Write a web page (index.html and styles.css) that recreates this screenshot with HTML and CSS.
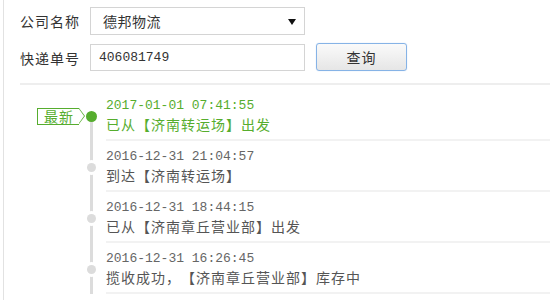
FILE: index.html
```html
<!DOCTYPE html>
<html lang="zh-CN">
<head>
  <meta charset="UTF-8">
  <title>快递查询</title>
  <link rel="stylesheet" href="styles.css">
</head>
<body>
  <div class="page">
    <div class="query">
      <div class="row">
        <label>公司名称</label>
        <div class="select">德邦物流<span class="arrow"></span></div>
      </div>
      <div class="row">
        <label>快递单号</label>
        <div class="input">406081749</div>
        <button class="btn">查询</button>
      </div>
    </div>
    <div class="divider"></div>

    <ul class="timeline">
      <li class="item latest">
        <div class="side"><span class="badge">最新</span></div>
        <div class="axis"><span class="dot"></span></div>
        <div class="info">
          <div class="time">2017-01-01 07:41:55</div>
          <div class="text">已从【济南转运场】出发</div>
        </div>
      </li>
      <li class="item">
        <div class="side"></div>
        <div class="axis"><span class="dot"></span></div>
        <div class="info">
          <div class="time">2016-12-31 21:04:57</div>
          <div class="text">到达【济南转运场】</div>
        </div>
      </li>
      <li class="item">
        <div class="side"></div>
        <div class="axis"><span class="dot"></span></div>
        <div class="info">
          <div class="time">2016-12-31 18:44:15</div>
          <div class="text">已从【济南章丘营业部】出发</div>
        </div>
      </li>
      <li class="item">
        <div class="side"></div>
        <div class="axis"><span class="dot"></span></div>
        <div class="info">
          <div class="time">2016-12-31 16:26:45</div>
          <div class="text">揽收成功，【济南章丘营业部】库存中</div>
        </div>
      </li>
    </ul>
  </div>
</body>
</html>
```

FILE: styles.css
```css
body { margin: 0; background: #fff; font-family: "Noto Sans CJK SC", "Liberation Sans", sans-serif; font-size: 14px; color: #333; text-spacing-trim: space-all; }
.page { margin-left: 3px; border-left: 1px solid #e2e2e2; height: 300px; overflow: hidden; }

.query { padding: 7px 0 0 16px; }
.row { display: flex; align-items: center; height: 28px; margin-bottom: 9px; }
.row:last-child { height: 27px; margin-bottom: 0; }
.row label { width: 70px; letter-spacing: 1px; color: #333; }
.select, .input { box-sizing: border-box; width: 215px; height: 100%; border: 1px solid #d4d4d4; display: flex; align-items: center; position: relative; }
.select { padding-left: 12px; letter-spacing: 0.5px; }
.input { padding-left: 8px; font-family: "Liberation Mono", monospace; font-size: 13px; }
.arrow { position: absolute; right: 8px; top: 11px; border-left: 4px solid transparent; border-right: 4px solid transparent; border-top: 6px solid #111; }
.btn { margin-left: 11px; width: 91px; height: 28px; margin-top: -1px; border: 1px solid #86b3e6; border-radius: 3px; background: linear-gradient(#fafafa, #e6e6e6); box-shadow: 0 0 1px #a9c9ee; font-family: inherit; font-size: 14px; letter-spacing: 1px; color: #333; }

.divider { margin: 12px 0 0 16px; height: 2px; background: #eeeeee; }

.timeline { list-style: none; margin: 0; padding: 5px 0 0; }
.item { display: grid; grid-template-columns: 75px 24px 1fr; }
.side { display: flex; justify-content: flex-end; align-items: flex-start; }
.badge { position: relative; margin-top: 18px; height: 15px; line-height: 15px; padding: 0 5px 0 6px; border: 1px solid #56ad2e; border-right: none; color: #56ad2e; font-size: 14px; letter-spacing: 1px; background: #fff; }
.badge::before { content: ""; position: absolute; right: -6px; top: -1px; border-top: 8.5px solid transparent; border-bottom: 8.5px solid transparent; border-left: 6px solid #56ad2e; }
.badge::after { content: ""; position: absolute; right: -5px; top: 0; border-top: 7.5px solid transparent; border-bottom: 7.5px solid transparent; border-left: 5px solid #fff; }

.axis { position: relative; }
.axis::before { content: ""; position: absolute; left: 11px; top: 0; bottom: 0; width: 3px; background: #dcdcdc; }
.latest .axis::before { top: 26px; }
.dot { position: absolute; left: 8px; top: 22px; width: 9px; height: 9px; border-radius: 50%; background: #dcdcdc; box-shadow: 0 0 0 3px #fff; }
.latest .dot { left: 7px; top: 21px; width: 11px; height: 11px; background: #56ad2e; box-shadow: none; }

.info { margin-left: 3px; padding: 6px 0 5px; border-bottom: 2px solid #f2f2f2; }
.time { height: 19px; line-height: 19px; font-family: "Liberation Mono", monospace; font-size: 13px; color: #666; }
.text { height: 19px; line-height: 19px; letter-spacing: 1px; color: #555; }
.latest .time, .latest .text { color: #56ad2e; }
```
